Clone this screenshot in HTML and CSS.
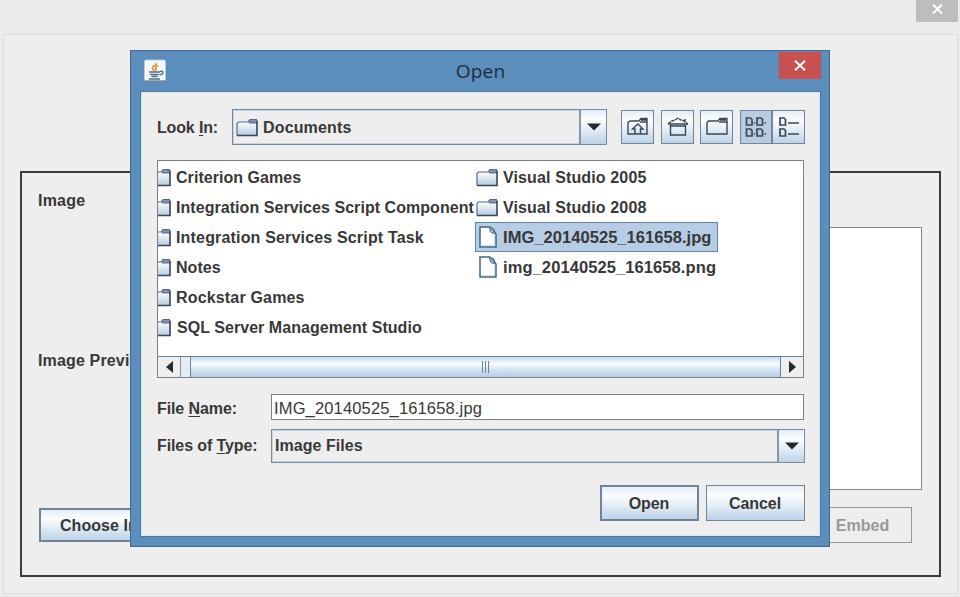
FILE: index.html
```html
<!DOCTYPE html>
<html lang="en">
<head>
<meta charset="utf-8">
<title>Open</title>
<link rel="stylesheet" href="styles.css">
</head>
<body>
<svg class="defs" width="0" height="0" aria-hidden="true">
  <defs>
    <linearGradient id="shade" x1="0" y1="0" x2="0" y2="1">
      <stop offset="0" stop-color="#ffffff"/>
      <stop offset="1" stop-color="#b4cae0"/>
    </linearGradient>
    <symbol id="folder" viewBox="0 0 22 19">
      <path d="M1 5.500 2.500 4H12l2 2h7v11.500H1z" fill="url(#shade)"/>
      <path d="M13 2.500 14.500 1H21v4h-8.500z" fill="#8290b5"/>
      <path d="M1 17.500V5.500L2.500 4H12l2-2.500h7M13 5h8" fill="none" stroke="#5b6882" stroke-width="1.200"/>
      <path d="M1 17.500h20V2.500" fill="none" stroke="#384653" stroke-width="1.600"/>
    </symbol>
    <symbol id="file" viewBox="0 0 18 22">
      <path d="M1 1h10l6 7v13H1z" fill="#fff" stroke="#3d6587" stroke-width="1.500"/>
      <path d="M2.500 19.500h13V10" fill="none" stroke="#cfe0ef"/>
      <path d="M10.500 1.500 11.500 5.500l4 2.500M11.500 1.500l2.500 1 2 3" fill="#dce9f5" stroke="#52728e" stroke-width="1.200"/>
    </symbol>
  </defs>
</svg>
<div class="window">
  <header class="window-bar"><button class="window-close" aria-label="Close"><svg width="11" height="10" viewBox="0 0 11 10"><path d="M1 .5l9 9M10 .5l-9 9"/></svg></button></header>
  <main class="window-body">
    <section class="panel">
      <div class="row-image">Image</div>
      <div class="row-preview"><span>Image Preview</span><div class="preview"></div></div>
      <div class="row-actions"><button class="btn choose">Choose Image</button><button class="btn embed">Embed</button></div>
    </section>
  </main>
</div>

<div class="dialog" role="dialog">
  <header class="titlebar">
    <svg class="java" width="22" height="23" viewBox="0 0 22 23">
      <rect x=".5" y="1" width="21" height="21" rx="1.500" fill="#f6f8f8" stroke="#b4cbdc"/>
      <path d="M1 22h20" stroke="#4d6b82"/>
      <path d="M12.500 4C13 7 7.500 7 8.500 9.500q1.500 1 1 2.500M14.500 6.500c-4 1.500-3 3-2.500 4 0 1-.5 1.500-1 2" fill="none" stroke="#d99545" stroke-width="1.700"/>
      <path d="M5 13h11M6 15.500h9M7.500 17.500h6M5 20h11M16 12.500c4-1.500 4 3-.5 3.500" fill="none" stroke="#54718a" stroke-width="1.400"/>
    </svg>
    <h1>Open</h1>
    <button class="close" aria-label="Close"><svg width="12" height="11" viewBox="0 0 12 11"><path d="M1 .7l10 9.600M11 .7L1 10.300"/></svg></button>
  </header>
  <div class="content">
    <div class="lookin">
      <label>Look <u>I</u>n:</label>
      <div class="combo">
        <svg class="folder" width="22" height="19"><use href="#folder"/></svg>
        <span>Documents</span>
        <i class="drop"><svg width="14" height="8"><path d="M0 .5h14L7 7.500z"/></svg></i>
      </div>
      <div class="tools">
        <button class="tool"><svg width="22" height="20" viewBox="0 0 22 20"><path d="M8 17H1V5.500L3 4h9l2-2.500h6V17h-6.500M13 5h7M14 3h6M8 17v-5H5.500L11 7l5 5h-2.500v5z"/></svg></button>
        <button class="tool"><svg width="22" height="20" viewBox="0 0 22 20"><path d="M3.500 8v10h15V8M3.500 9h15M1 7h20"/><path d="M1 7l4-3 3-1 3-2 3 2 2 .5L21 7M18 2v3" stroke-dasharray="3.500 .7"/></svg></button>
        <button class="tool new-folder"><svg width="22" height="20" viewBox="0 0 22 20"><path d="M1 17V5.500L2.500 4H12l2-2.500h7V17zM13 5h8M14 3h6"/></svg></button>
        <div class="toggle">
          <button class="tool on"><svg width="22" height="20" viewBox="0 0 22 20"><path class="bold" d="M1.500 1h4l1.500 1.500V8H1.500zM12 1h4l1.500 1.500V8H12zM1.500 12h4L7 13.500V19H1.500zM12 12h4l1.500 1.500V19H12zM8.700 6h1.500M19.500 6H21M8.700 17h1.500M19.500 17H21"/></svg></button>
          <button class="tool"><svg width="22" height="20" viewBox="0 0 22 20"><path class="bold" d="M2 1h4l1.500 1.500V8H2zM2 12h4l1.500 1.500V19H2zM10 6h11M10 17h11"/></svg></button>
        </div>
      </div>
    </div>

    <div class="browser">
      <div class="lists">
        <ul class="left">
          <li><svg class="folder" width="22" height="19"><use href="#folder"/></svg><span>Criterion Games</span></li>
          <li><svg class="folder" width="22" height="19"><use href="#folder"/></svg><span>Integration Services Script Component</span></li>
          <li><svg class="folder" width="22" height="19"><use href="#folder"/></svg><span class="task">Integration Services Script Task</span></li>
          <li><svg class="folder" width="22" height="19"><use href="#folder"/></svg><span>Notes</span></li>
          <li><svg class="folder" width="22" height="19"><use href="#folder"/></svg><span class="task">Rockstar Games</span></li>
          <li><svg class="folder" width="22" height="19"><use href="#folder"/></svg><span>SQL Server Management Studio</span></li>
        </ul>
        <ul class="right">
          <li><svg class="folder" width="22" height="19"><use href="#folder"/></svg><span class="studio">Visual Studio 2005</span></li>
          <li><svg class="folder" width="22" height="19"><use href="#folder"/></svg><span class="studio">Visual Studio 2008</span></li>
          <li class="selected"><svg class="file" width="18" height="22"><use href="#file"/></svg><span class="digits">IMG_20140525_161658.jpg</span></li>
          <li><svg class="file" width="18" height="22"><use href="#file"/></svg><span class="digits wide">img_20140525_161658.png</span></li>
        </ul>
      </div>
      <div class="scrollbar">
        <i class="arrow"><svg width="7" height="12"><path d="M7 0v12L0 6z"/></svg></i>
        <div class="track"><div class="thumb"><i></i><i></i><i></i></div></div>
        <i class="arrow end"><svg width="7" height="12"><path d="M0 0v12l7-6z"/></svg></i>
      </div>
    </div>

    <div class="field name"><label>File <u>N</u>ame:</label><div class="input">IMG_20140525_161658.jpg</div></div>
    <div class="field type"><label>Files of <u>T</u>ype:</label>
      <div class="combo"><span>Image Files</span><i class="drop"><svg width="14" height="8"><path d="M0 .5h14L7 7.500z"/></svg></i></div>
    </div>
    <div class="buttons"><button class="btn default">Open</button><button class="btn">Cancel</button></div>
  </div>
</div>
</body>
</html>
```
FILE: styles.css
```css
* { box-sizing: border-box; }
body {
  margin: 0;
  width: 960px;
  height: 597px;
  overflow: hidden;
  position: relative;
  background: #ebebeb;
  color: #383838;
  font: bold 16px/20px "Liberation Sans", Arial, sans-serif;
  letter-spacing: .05px;
}
button { font: inherit; letter-spacing: inherit; color: inherit; padding: 0; border: 0; border-radius: 0; }
ul { list-style: none; margin: 0; padding: 0; }
svg { display: block; flex: none; }
u { text-decoration-thickness: 1px; text-underline-offset: 2px; }
.defs { position: absolute; }

.window { height: 597px; padding: 0 2px 3px 3px; display: flex; flex-direction: column; }
.window-bar { height: 34px; display: flex; justify-content: flex-end; }
.window-close { width: 42px; height: 22px; background: #bdbdbd; display: grid; place-items: center; padding-bottom: 4px; }
.window-close path, .close path { fill: none; stroke: #fff; stroke-width: 2; }
.window-body { flex: 1; border: 1px solid #dcdcdc; background: #eee; padding: 136px 16px 16px 16px; }
.panel { height: 406px; border: 2px solid #3c3c3c; padding: 18px 17px 0 16px; background: #eee; }
.row-image { height: 36px; letter-spacing: .2px; }
.row-preview { height: 263px; display: flex; align-items: center; justify-content: space-between; }
.row-preview span { padding-top: 4px; letter-spacing: .15px; }
.preview { width: 300px; height: 263px; background: #fff; border: 1px solid #7d8790; }
.row-actions { display: flex; justify-content: space-between; padding: 17px 10px 0 1px; }

.btn {
  width: 99px;
  height: 36px;
  padding-top: 2px;
  border: 1px solid #71869b;
  background: linear-gradient(#e3edf7, #fcfdfe 28%, #e8f0f8 52%, #bdd2e7);
}
.btn.default, .btn.choose { border-width: 2px; border-color: #708397; }
.btn.choose { width: 150px; height: 34px; margin-top: 1px; text-align: left; padding-left: 19px; }
.btn.embed { height: 36px; background: #eee; border-color: #989898; color: #999; }

.dialog {
  position: absolute;
  left: 130px;
  top: 50px;
  width: 700px;
  height: 497px;
  border: 1px solid #45688a;
  background: #5b8ebc;
  padding: 0 9px 9px 10px;
}
.titlebar { height: 41px; display: flex; align-items: flex-start; }
.java { margin: 8px 0 0 3px; }
.titlebar h1 { flex: 1; margin: 7px -16px 0 0; text-align: center; font: 19px/26px "Open Sans", sans-serif; letter-spacing: .2px; color: #1d2d3b; }
.close { width: 42px; height: 27px; margin: 1px -1px 0 0; background: #c8504f; display: grid; place-items: center; }
.content {
  height: 444px;
  border: 1px solid #d6e6f2;
  box-shadow: 0 -1px #4d779d, 0 1px #4d779d, -1px 0 #4d779d, 1px 0 #4d779d;
  background: #eee;
  padding: 16px 14px 0 15px;
}

.lookin { height: 36px; display: flex; align-items: center; }
.lookin label { width: 75px; letter-spacing: -.15px; padding-top: 1px; }
.combo { display: flex; align-items: center; border: 1px solid #778ba0; background: #eee; box-shadow: inset 0 0 0 1px #c6d3df; }
.lookin .combo { width: 375px; height: 36px; padding-left: 3px; }
.lookin .combo span { flex: 1; padding: 2px 0 0 5px; letter-spacing: .15px; }
.drop {
  align-self: stretch;
  width: 27px;
  border-left: 2px solid #8398ad;
  display: grid;
  place-items: center;
  background: linear-gradient(#e3edf7, #fcfdfe 28%, #e8f0f8 52%, #bdd2e7);
}
.drop path, .arrow path { fill: #242a30; }
.tools { display: flex; gap: 7px; margin: -1px 0 0 14px; }
.tool {
  width: 33px;
  height: 34px;
  border: 1px solid #71869b;
  display: grid;
  place-items: center;
  background: linear-gradient(#e3edf7, #fcfdfe 28%, #e8f0f8 52%, #bdd2e7);
}
.tool path { fill: none; stroke: #394857; stroke-width: 1.4; }
.tool .bold { stroke-width: 1.7; }
.new-folder { margin-left: -1px; }
.toggle { display: flex; }
.toggle .tool + .tool { border-left: 0; width: 32px; }
.tool.on { background: #b7cce3; border-right-width: 2px; }

.browser { margin-top: 15px; width: 647px; height: 218px; border: 1px solid #77828d; background: #fff; overflow: hidden; }
.lists { height: 195px; padding-top: 1px; display: grid; grid-template-columns: 317px 1fr; }
.lists li { height: 30px; display: flex; align-items: center; white-space: nowrap; }
.lists span { padding-top: 2px; }
.left svg { margin-left: -9px; }
.left span { margin-left: 5px; }
.left .task { letter-spacing: .17px; }
.left li:last-child span { margin-left: 6px; }
.right li { border: 1px solid transparent; width: 243px; }
.right .folder { margin: 0 5px 0 0; }
.right .file { margin: 0 6px 0 3px; }
.right .selected { background: #b7cce5; border-color: #6683a6; }
.lists .studio { letter-spacing: .13px; }
.lists .digits { font-size: 16.5px; letter-spacing: .05px; padding-top: 0; }
.lists .wide { letter-spacing: .09px; }
.scrollbar { height: 21px; border-top: 1px solid #6682a1; display: flex; background: #eee; }
.arrow { width: 23px; border-right: 1px solid #8b949d; display: grid; place-items: center; }
.arrow.end { width: 22px; border: 0; }
.track { flex: 1; padding-left: 9px; background: #e4ebf2; display: flex; }
.thumb {
  flex: 1;
  border: solid #6682a1;
  border-width: 0 1px;
  background: linear-gradient(#c6d9ec, #fafcfe 35%, #dce8f4 55%, #b6cde5);
  display: flex;
  justify-content: center;
  align-items: center;
  gap: 2px;
}
.thumb i { width: 1px; height: 12px; background: #6682a1; }

.field { display: flex; align-items: center; }
.field label { width: 114px; letter-spacing: -.1px; }
.name { height: 26px; margin-top: 16px; }
.name label { padding-top: 4px; }
.input { width: 533px; height: 26px; padding: 3px 2px; background: #fff; border: 1px solid #77828d; font-weight: normal; font-size: 16.5px; letter-spacing: .15px; line-height: 21px; }
.type { height: 34px; margin-top: 9px; }
.type .combo { width: 534px; height: 34px; padding-left: 3px; }
.type .combo span { flex: 1; }
.buttons { display: flex; justify-content: flex-end; gap: 7px; margin-top: 22px; letter-spacing: -.05px; }
.buttons .btn { padding-right: 1px; }
```
